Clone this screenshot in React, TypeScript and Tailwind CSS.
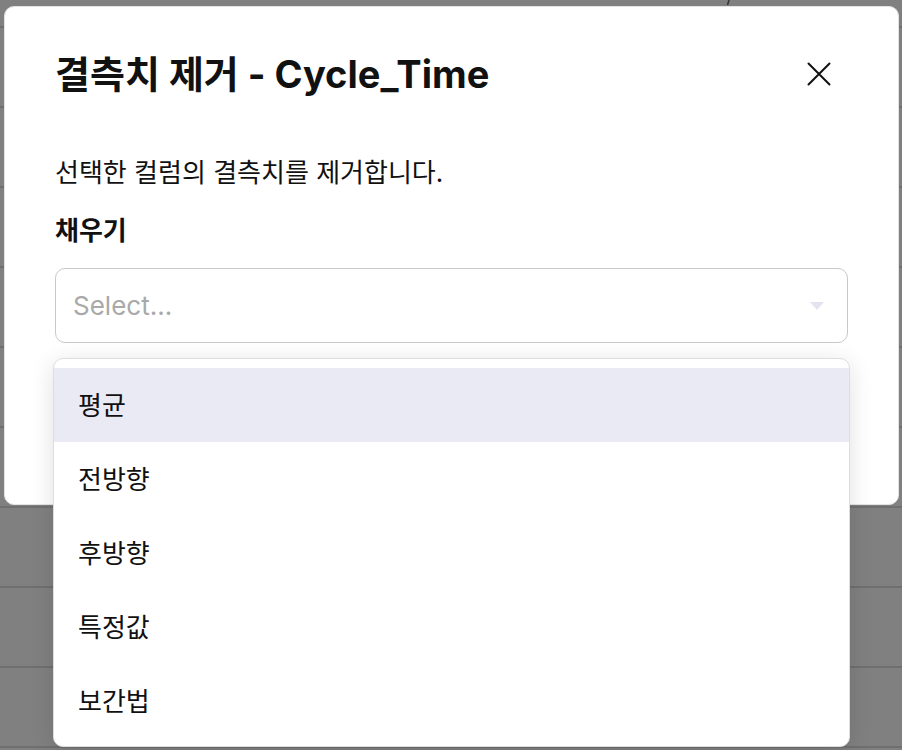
const FONT = "font-['Inter','Noto_Sans_CJK_KR',sans-serif]";

const options = ["평균", "전방향", "후방향", "특정값", "보간법"];

// background table rows behind the overlay
function BackgroundRows() {
  return (
    <div className="flex flex-col">
      <div className="h-[26px]" />
      {Array.from({ length: 10 }).map((_, i) => (
        <div key={i} className="h-[80px] border-t-2 border-[#6f6f6f]" />
      ))}
    </div>
  );
}

export default function App() {
  return (
    <div className={`relative w-[902px] h-[750px] overflow-hidden bg-[#808080] ${FONT}`}>
      <BackgroundRows />
      <svg className="absolute left-[725px] top-0" width="6" height="6" viewBox="0 0 6 6">
        <path d="M4 0 L2.5 5" stroke="#333" strokeWidth="1.5" />
      </svg>

      {/* Dialog */}
      <div className="absolute left-[4px] top-[6px] w-[895px] h-[499px] rounded-[10px] bg-white border border-[#e4e4e4] px-[50px] pt-[46px]">
        <div className="flex items-center justify-between">
          <h2 className="text-[38px] leading-[42px] font-bold text-[#111]">
            결측치 제거 - Cycle_Time
          </h2>
          <button className="mr-[17px] text-[#111]">
            <svg width="24" height="24" viewBox="0 0 24 24" fill="none" stroke="currentColor" strokeWidth="2" strokeLinecap="round">
              <path d="M1.5 1.5 L22.5 22.5 M22.5 1.5 L1.5 22.5" />
            </svg>
          </button>
        </div>
        <p className="mt-[62px] text-[26px] leading-[32px] text-[#111]">
          선택한 컬럼의 결측치를 제거합니다.
        </p>
        <div className="mt-[26px] text-[26px] leading-[32px] font-semibold text-[#111]">채우기</div>
        <div className="mt-[21px] h-[75px] rounded-[10px] border-[1.5px] border-[#c9c9c9] flex items-center justify-between pl-[17px] pr-[22px]">
          <span className="text-[26px] text-[#a9a9a9]">Select...</span>
          <svg width="16" height="10" viewBox="0 0 16 10">
            <path d="M1 1 L15 1 L8 9 Z" fill="#e3e3ef" />
          </svg>
        </div>
      </div>

      {/* Dropdown menu */}
      <div className="absolute left-[53px] top-[358px] w-[797px] rounded-[10px] bg-white border border-[#dedede] shadow-[0_4px_24px_rgba(0,0,0,0.12)] pt-[9px] pb-[8px]">
        {options.map((o, i) => (
          <div
            key={o}
            className={`h-[74px] flex items-center px-6 text-[26px] text-[#111] ${i === 0 ? "bg-[#eaeaf5]" : ""}`}
          >
            {o}
          </div>
        ))}
      </div>
    </div>
  );
}
